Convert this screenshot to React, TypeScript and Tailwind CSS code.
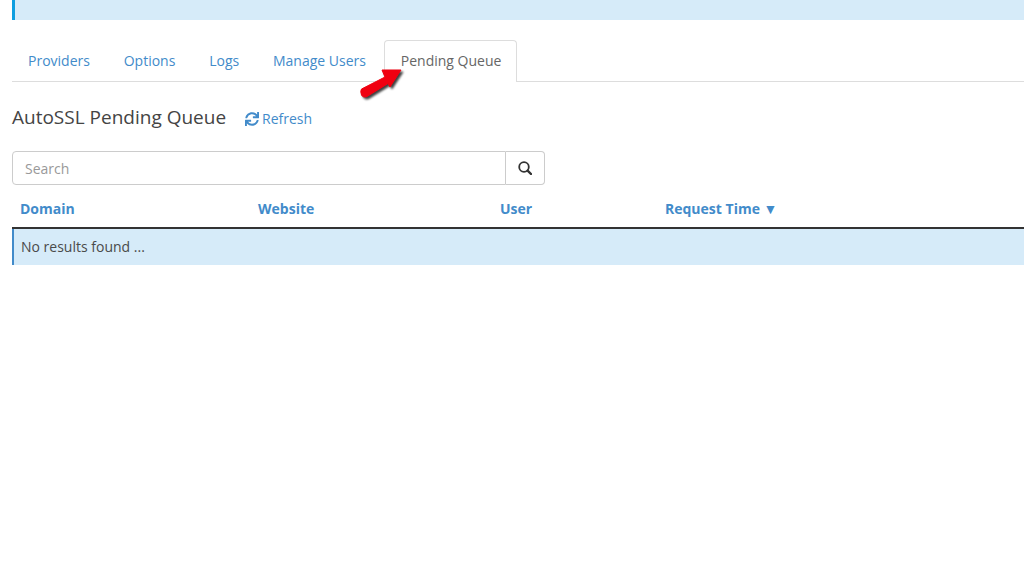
import { FaSync } from "react-icons/fa";

const TABS = ["Providers", "Options", "Logs", "Manage Users"];

function SearchIcon() {
  return (
    <svg width="14" height="14" viewBox="0 0 14 14" fill="none" stroke="currentColor">
      <circle cx="6" cy="6" r="4.8" strokeWidth="1.8" />
      <path d="M9.6 9.6 L13 13" strokeWidth="2.4" strokeLinecap="round" />
    </svg>
  );
}

function Arrow() {
  return (
    <svg className="absolute left-[358px] top-[68px] drop-shadow-[2px_2px_1px_rgba(0,0,0,0.75)]" width="48" height="34" viewBox="0 0 48 34">
      <path d="M3.5 21 L27 9 L24 2 L43 2 L32 19 L30 15.5 L9 28.5 Q5 30 3.5 27 Q2 23 3.5 21 Z" fill="#f00010" stroke="#f00010" strokeWidth="1" strokeLinejoin="round" />
    </svg>
  );
}

export default function App() {
  return (
    <div className="relative h-[576px] w-[1024px] overflow-hidden bg-white font-['Open_Sans',sans-serif] text-sm text-[#4a4a4a]">
      <div className="ml-3 h-5 border-l-[3px] border-[#0e9ee0] bg-[#d6ebf9]" />

      <div className="ml-3 mt-5 flex h-[42px] items-stretch border-b border-[#ddd]">
        {TABS.map((tab) => (
          <a key={tab} className="mr-[1.8px] flex items-center px-4 pt-px text-[#428bca]">{tab}</a>
        ))}
        <a className="-mb-px flex items-center rounded-t border border-b-0 border-[#ddd] bg-white pr-[15px] pl-4 pb-[2px] text-[#666]">Pending Queue</a>
      </div>

      <div className="ml-3 mt-[21px] flex h-7 items-center">
        <h2 className="text-[19px] leading-7 text-[#444]">AutoSSL Pending Queue</h2>
        <a className="ml-[19px] flex items-center gap-[3px] pt-[3px] text-[#428bca]">
          <FaSync size={14} />
          Refresh
        </a>
      </div>

      <div className="ml-3 mt-5 flex h-[34px] w-[533px]">
        <div className="flex flex-1 items-center rounded-l border border-[#ccc] px-3 pt-px text-[#999]">Search</div>
        <div className="flex w-[39px] items-center justify-center rounded-r border border-l-0 border-[#ccc] text-[#333]">
          <SearchIcon />
        </div>
      </div>

      <div className="ml-3 mt-[7px] flex h-[37px] items-center border-b-2 border-[#333] pb-[2px] font-bold text-[#428bca]">
        <span className="w-[246px] pl-2">Domain</span>
        <span className="w-[242px]">Website</span>
        <span className="w-[165px]">User</span>
        <span>Request Time ▼</span>
      </div>

      <div className="ml-3 flex h-9 items-center border-l-2 border-[#428bca] bg-[#d6ebf9] pl-[7px]">No results found ...</div>

      <Arrow />
    </div>
  );
}
